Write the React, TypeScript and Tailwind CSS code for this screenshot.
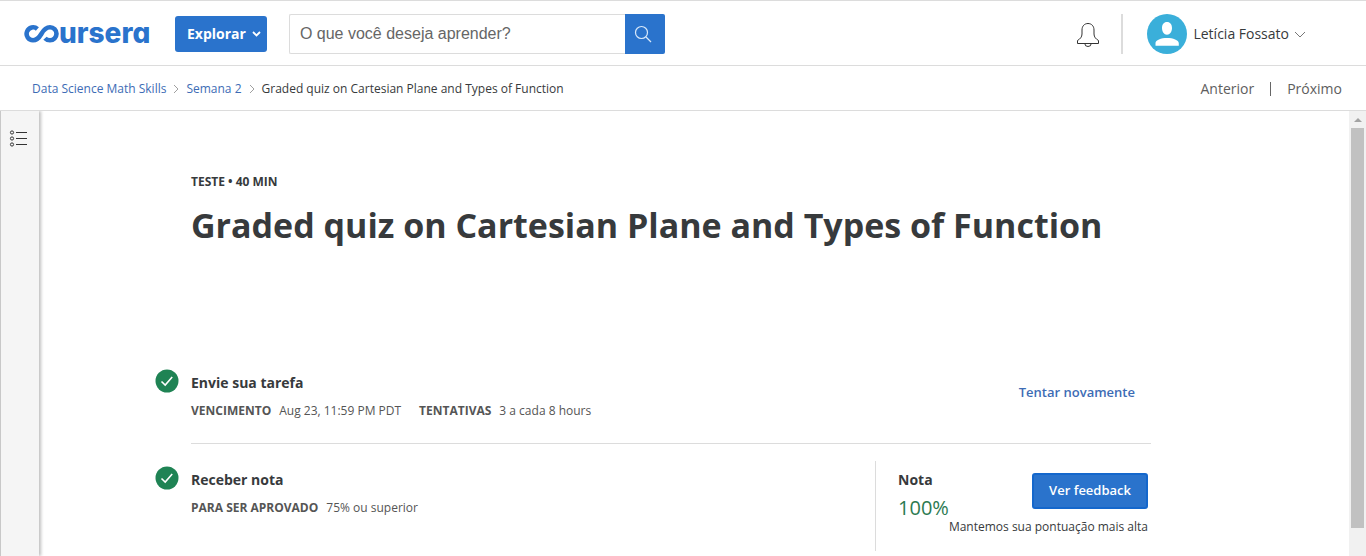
import type { ReactNode } from "react";

function Logo() {
  return (
    <a href="#inicio" aria-label="coursera" className="block shrink-0">
      <svg width="130" height="40" viewBox="0 -4 130 40" className="block">
        <path
          d="M13.400 10.900 A6.500 6.500 0 1 0 9 22.300 C12.500 22.300 14.800 20.300 17.300 16 C19.800 11.500 22 9.300 26 9.300 A6.500 6.500 0 1 1 26 22.300 C23.800 22.300 22.200 21.500 21 20.200"
          fill="none"
          stroke="#2a73cc"
          strokeWidth="4.600"
        />
        <text
          x="35"
          y="25"
          fill="#2a73cc"
          className="font-['Inter',sans-serif] text-[28px] font-extrabold [font-feature-settings:'cv11']"
        >
          ursera
        </text>
      </svg>
    </a>
  );
}

function Crumb() {
  return (
    <svg width="6" height="10" viewBox="0 0 6 10" fill="none" stroke="#a0a0a0" aria-hidden="true">
      <path d="M1 1l4 4-4 4" />
    </svg>
  );
}

function DoneIcon() {
  return (
    <svg width="24" height="24" viewBox="0 0 24 24" className="shrink-0" aria-hidden="true">
      <circle cx="12" cy="12" r="11.500" fill="#1f8354" />
      <path d="M6.500 12.500l3.700 3.500 7-8" fill="none" stroke="#fff" strokeWidth="1.600" />
    </svg>
  );
}

function Detail({ label, children }: { label: string; children: ReactNode }) {
  return (
    <div className="flex gap-2">
      <dt className="font-bold">{label}</dt>
      <dd>{children}</dd>
    </div>
  );
}

export default function App() {
  return (
    <div className="flex min-h-screen flex-col bg-white font-['Open_Sans',sans-serif] text-[#373a3c]">
      <header className="flex h-[66px] shrink-0 items-center border-y border-[#dcdcdc] pt-0.5 pr-[60px] pl-6">
        <Logo />
        <button
          type="button"
          className="ml-[21px] flex h-9 items-center gap-1.5 rounded-[3px] bg-[#2a73cc] pr-1.5 pl-3 text-sm font-bold text-white"
        >
          Explorar
          <svg width="9" height="6" viewBox="0 0 9 6" fill="none" stroke="#fff" strokeWidth="1.800" aria-hidden="true">
            <path d="M1 1l3.500 3.500L8 1" />
          </svg>
        </button>
        <form role="search" className="ml-[22px] flex h-10 w-[376px]">
          <input
            type="search"
            aria-label="O que você deseja aprender?"
            placeholder="O que você deseja aprender?"
            className="min-w-0 flex-1 rounded-l-[2px] border border-r-0 border-[#dcdcdc] px-2.5 font-['Liberation_Sans',sans-serif] text-base placeholder:text-[#666]"
          />
          <button
            type="button"
            aria-label="Pesquisar"
            className="flex w-10 items-center justify-center rounded-r-[2px] bg-[#2a73cc] pr-1"
          >
            <svg width="18" height="18" viewBox="0 0 18 18" fill="none" stroke="#d8e8fa" strokeWidth="1.200" aria-hidden="true">
              <circle cx="7.500" cy="7.500" r="6" />
              <path d="M12 12l5 5" />
            </svg>
          </button>
        </form>
        <div className="ml-auto flex items-center">
          <button type="button" aria-label="Notificações">
            <svg width="24" height="26" viewBox="0 0 24 26" fill="none" stroke="#333" aria-hidden="true">
              <path d="M1.500 22.500v-3c2.600-1.500 4.500-3.500 4.500-6.500V9C6 5 8.500 2.500 12 2.500S18 5 18 9v4c0 3 1.900 5 4.500 6.500v3zM8.800 22.500a3.200 3 0 0 0 6.400 0" />
            </svg>
          </button>
          <span className="ml-[21px] h-10 w-0.5 bg-[#dcdcdc]" />
          <button type="button" className="ml-6 flex items-center text-sm">
            <svg width="40" height="40" viewBox="0 0 40 40" aria-hidden="true">
              <circle cx="20" cy="20" r="20" fill="#3aafda" />
              <path d="M20 8c3.200 0 5 2.500 5 6s-2 6.700-5 6.700-5-3.200-5-6.700 1.800-6 5-6zM8.500 31.800v-2.500C8.500 26 14 24 20 24s11.800 2 11.800 5.300v2.500z" fill="#fff" />
            </svg>
            <span className="ml-1.5">Letícia Fossato</span>
            <svg width="12" height="7" viewBox="0 0 12 7" fill="none" stroke="#777" className="ml-[5px]" aria-hidden="true">
              <path d="M1 1l5 5 5-5" />
            </svg>
          </button>
        </div>
      </header>

      <div className="flex h-[45px] shrink-0 items-center justify-between border-b border-[#dcdcdc] pt-0.5 pr-6 pl-8">
        <nav aria-label="Navegação" className="flex items-center gap-[7px] text-xs">
          <a href="#curso" className="text-[#3d6cb5]">Data Science Math Skills</a>
          <Crumb />
          <a href="#semana" className="text-[#3d6cb5]">Semana 2</a>
          <Crumb />
          <span>Graded quiz on Cartesian Plane and Types of Function</span>
        </nav>
        <nav aria-label="Itens" className="flex items-center gap-4 text-sm text-[#5e5e5e]">
          <a href="#anterior">Anterior</a>
          <span className="h-3.5 w-px bg-[#666]" />
          <a href="#proximo">Próximo</a>
        </nav>
      </div>

      <div className="flex flex-1">
        <aside className="w-[39px] shrink-0 border-l border-[#c8c8c8] bg-[#f5f5f5] pt-[18px] pl-2 shadow-[2px_0_3px_rgba(0,0,0,0.25)] [clip-path:inset(0_-8px_0_0)]">
          <button type="button" aria-label="Abrir menu" className="block">
            <svg width="20" height="20" viewBox="0 0 20 20" fill="none" stroke="#333" aria-hidden="true">
              <circle cx="3" cy="3.500" r="1.600" />
              <circle cx="3" cy="9.500" r="1.600" />
              <circle cx="3" cy="15.500" r="1.600" />
              <path d="M7 3.500h11M7 9.500h11M7 15.500h11" />
            </svg>
          </button>
        </aside>

        <main className="min-w-0 flex-1 pt-[63px] pr-[46px]">
          <div className="mx-auto max-w-[960px]">
            <p className="text-xs leading-4 font-bold">TESTE • 40 MIN</p>
            <h1 className="mt-[11px] text-[34px] leading-[48px] font-bold">
              Graded quiz on Cartesian Plane and Types of Function
            </h1>

            <section className="mt-[120px] -ml-9 flex gap-3">
              <DoneIcon />
              <div className="flex flex-1 items-start justify-between border-b border-[#dcdcdc] pb-[22px]">
                <div className="pt-1">
                  <h2 className="text-sm leading-5 font-bold">Envie sua tarefa</h2>
                  <dl className="mt-2 flex gap-[18px] text-xs leading-5 text-[#555]">
                    <Detail label="VENCIMENTO">Aug 23, 11:59 PM PDT</Detail>
                    <Detail label="TENTATIVAS">3 a cada 8 hours</Detail>
                  </dl>
                </div>
                <button type="button" className="mt-[13px] mr-4 text-[13px] leading-5 font-semibold text-[#3d6cb5]">
                  Tentar novamente
                </button>
              </div>
            </section>

            <section className="-ml-9 flex gap-3 pt-[22px]">
              <DoneIcon />
              <div className="flex flex-1 items-start justify-between">
                <div className="pt-1">
                  <h2 className="text-sm leading-5 font-bold">Receber nota</h2>
                  <dl className="mt-2 text-xs leading-5 text-[#555]">
                    <Detail label="PARA SER APROVADO">75% ou superior</Detail>
                  </dl>
                </div>
                <div className="-mt-[5px] flex h-[90px] border-l border-[#dcdcdc] pr-[3px] pl-[22px]">
                  <div className="pt-[9px]">
                    <h2 className="text-sm leading-5 font-bold">Nota</h2>
                    <p className="mt-1 text-xl leading-7 text-[#2c7a51]">100%</p>
                  </div>
                  <div className="flex flex-col items-end pt-3">
                    <button
                      type="button"
                      className="h-9 rounded-[3px] border-2 border-[#1467cc] bg-[#2a73cc] px-[15px] text-[13px] font-semibold text-white"
                    >
                      Ver feedback
                    </button>
                    <p className="mt-2 text-xs leading-5">Mantemos sua pontuação mais alta</p>
                  </div>
                </div>
              </div>
            </section>
          </div>
        </main>

        <div className="flex w-[17px] shrink-0 flex-col items-center bg-[#f1f1f1]" aria-hidden="true">
          <svg width="17" height="17" viewBox="0 0 17 17">
            <path d="M5 11h8L9 7z" fill="#a3a3a3" />
          </svg>
          <span className="mb-7 w-[13px] flex-1 bg-[#c1c1c1]" />
        </div>
      </div>
    </div>
  );
}
